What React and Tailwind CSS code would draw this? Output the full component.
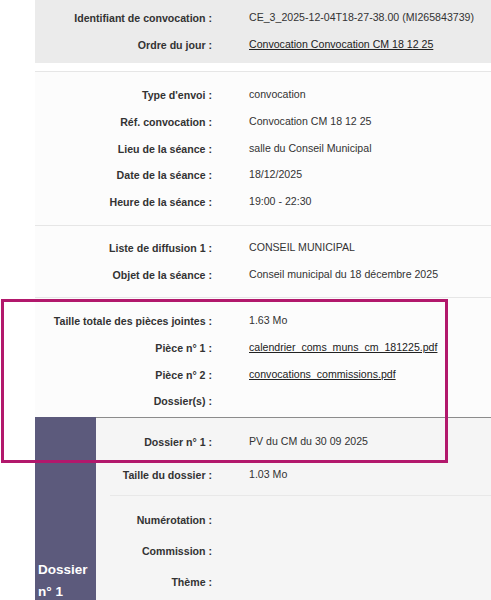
import React from 'react';

const Row = ({ label, children, labelWidth = 177, height = 'h-[26.7px]' }) => (
  <div className={`flex items-center ${height}`}>
    <div className="shrink-0 text-right font-bold text-[#333]" style={{ width: labelWidth }}>
      {label}
    </div>
    <div className="ml-[37px] mb-[2px] text-[#333]">{children}</div>
  </div>
);

const Link = ({ children }) => (
  <a href="#" className="text-[#222] underline">
    {children}
  </a>
);

export default function App() {
  return (
    <div
      className="relative h-[600px] w-full overflow-hidden bg-white text-[10.6px] leading-none"
      style={{ fontFamily: '"Liberation Sans", Arial, sans-serif' }}
    >
      <div className="ml-[35px] flex flex-col">
        {/* identifiant */}
        <div className="bg-[#ebebeb] py-[5px]">
          <Row label="Identifiant de convocation :">CE_3_2025-12-04T18-27-38.00 (MI265843739)</Row>
          <Row label="Ordre du jour :">
            <Link>Convocation Convocation CM 18 12 25</Link>
          </Row>
        </div>

        <div className="mt-[8px] border-t border-[#e6e6e6] bg-[#fcfcfc] pt-[10px] pb-[9px]">
          <Row label="Type d'envoi :">convocation</Row>
          <Row label="Réf. convocation :">Convocation CM 18 12 25</Row>
          <Row label="Lieu de la séance :">salle du Conseil Municipal</Row>
          <Row label="Date de la séance :">18/12/2025</Row>
          <Row label="Heure de la séance :">19:00 - 22:30</Row>
        </div>

        <div className="border-t border-[#e6e6e6] bg-[#fcfcfc] pt-[9px] pb-[9px]">
          <Row label="Liste de diffusion 1 :">CONSEIL MUNICIPAL</Row>
          <Row label="Objet de la séance :">Conseil municipal du 18 décembre 2025</Row>
        </div>

        <div className="border-t border-[#e6e6e6] bg-[#fcfcfc] pt-[10px] pb-[2px]">
          <Row label="Taille totale des pièces jointes :">1.63 Mo</Row>
          <Row label="Pièce n° 1 :">
            <Link>calendrier_coms_muns_cm_181225.pdf</Link>
          </Row>
          <Row label="Pièce n° 2 :">
            <Link>convocations_commissions.pdf</Link>
          </Row>
          <Row label="Dossier(s) :" />
        </div>

        {/* dossier */}
        <div className="flex">
          <div className="flex w-[61px] shrink-0 flex-col justify-end bg-[#5c5a7c] px-[3px] text-[13.5px] font-bold leading-[22px] text-white">
            <div>Dossier</div>
            <div>n° 1</div>
            <div className="h-[12px]" />
          </div>
          <div className="flex-1 border-t border-[#8c8c8c] bg-[#f5f5f5]">
            <div className="pt-[11px] pb-[7px]">
              <Row label="Dossier n° 1 :" labelWidth={116}>PV du CM du 30 09 2025</Row>
              <div className="h-[6px]" />
              <Row label="Taille du dossier :" labelWidth={116}>1.03 Mo</Row>
            </div>
            <div className="ml-[14px] border-t border-[#e8e8e8]" />
            <div className="pt-[10px] pb-[20px]">
              <Row label="Numérotation :" labelWidth={116} height="h-[27px]" />
              <div className="h-[4px]" />
              <Row label="Commission :" labelWidth={116} height="h-[27px]" />
              <div className="h-[4px]" />
              <Row label="Thème :" labelWidth={116} height="h-[27px]" />
            </div>
          </div>
        </div>
      </div>

      {/* highlight frame */}
      <div className="pointer-events-none absolute left-[1px] top-[299px] h-[164px] w-[447px] border-[3px] border-[#b2186c]" />
    </div>
  );
}
